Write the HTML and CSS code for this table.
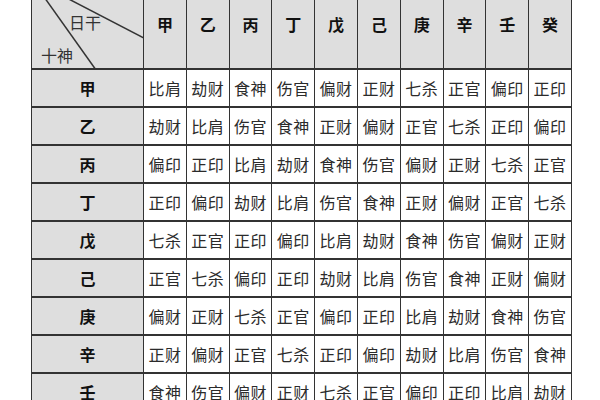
FILE: index.html
```html
<!DOCTYPE html>
<html lang="zh">
<head>
<meta charset="utf-8">
<link rel="stylesheet" href="styles.css">
</head>
<body>
<table class="gods">
  <colgroup>
    <col class="c-head">
    <col span="10" class="c-data">
  </colgroup>
  <thead>
    <tr class="top">
      <th class="corner">
        <svg class="diag" width="112" height="90" viewBox="0 0 112 90">
          <line x1="0" y1="0" x2="112" y2="58" stroke="#333" stroke-width="1.5"/>
          <line x1="0" y1="0" x2="64" y2="90" stroke="#333" stroke-width="1.5"/>
        </svg>
        <span class="lbl lbl-day">日干</span>
        <span class="lbl lbl-god">十神</span>
      </th>
      <th>甲</th><th>乙</th><th>丙</th><th>丁</th><th>戊</th><th>己</th><th>庚</th><th>辛</th><th>壬</th><th>癸</th>
    </tr>
  </thead>
  <tbody>
    <tr><th>甲</th><td>比肩</td><td>劫财</td><td>食神</td><td>伤官</td><td>偏财</td><td>正财</td><td>七杀</td><td>正官</td><td>偏印</td><td>正印</td></tr>
    <tr><th>乙</th><td>劫财</td><td>比肩</td><td>伤官</td><td>食神</td><td>正财</td><td>偏财</td><td>正官</td><td>七杀</td><td>正印</td><td>偏印</td></tr>
    <tr><th>丙</th><td>偏印</td><td>正印</td><td>比肩</td><td>劫财</td><td>食神</td><td>伤官</td><td>偏财</td><td>正财</td><td>七杀</td><td>正官</td></tr>
    <tr><th>丁</th><td>正印</td><td>偏印</td><td>劫财</td><td>比肩</td><td>伤官</td><td>食神</td><td>正财</td><td>偏财</td><td>正官</td><td>七杀</td></tr>
    <tr><th>戊</th><td>七杀</td><td>正官</td><td>正印</td><td>偏印</td><td>比肩</td><td>劫财</td><td>食神</td><td>伤官</td><td>偏财</td><td>正财</td></tr>
    <tr><th>己</th><td>正官</td><td>七杀</td><td>偏印</td><td>正印</td><td>劫财</td><td>比肩</td><td>伤官</td><td>食神</td><td>正财</td><td>偏财</td></tr>
    <tr><th>庚</th><td>偏财</td><td>正财</td><td>七杀</td><td>正官</td><td>偏印</td><td>正印</td><td>比肩</td><td>劫财</td><td>食神</td><td>伤官</td></tr>
    <tr><th>辛</th><td>正财</td><td>偏财</td><td>正官</td><td>七杀</td><td>正印</td><td>偏印</td><td>劫财</td><td>比肩</td><td>伤官</td><td>食神</td></tr>
    <tr><th>壬</th><td>食神</td><td>伤官</td><td>偏财</td><td>正财</td><td>七杀</td><td>正官</td><td>偏印</td><td>正印</td><td>比肩</td><td>劫财</td></tr>
    <tr><th>癸</th><td>伤官</td><td>食神</td><td>正财</td><td>偏财</td><td>正官</td><td>七杀</td><td>正印</td><td>偏印</td><td>劫财</td><td>比肩</td></tr>
  </tbody>
</table>
</body>
</html>
```
FILE: styles.css
```css
html, body {
  margin: 0;
  padding: 0;
  background: #ffffff;
  overflow: hidden;
}
body {
  font-family: "Noto Sans CJK SC", "Noto Sans", sans-serif;
  color: #2b2b2b;
}
.gods {
  border-collapse: collapse;
  table-layout: fixed;
  width: 540px;
  margin: -22px 0 0 31px;
}
.c-head { width: 112px; }
.c-data { width: 42.8px; }
.gods th,
.gods td {
  border: 2px solid #333;
  border-left-width: 1.5px;
  border-right-width: 1.5px;
  padding: 0;
  text-align: center;
  vertical-align: middle;
  font-size: 16px;
  line-height: 20px;
  height: 36px;
  white-space: nowrap;
}
.gods th {
  background: #dedede;
  font-weight: 700;
  color: #111;
}
.gods td {
  background: #ffffff;
  font-weight: 400;
  letter-spacing: 0.5px;
}
.top th {
  height: 88px;
}
.corner {
  position: relative;
}
.diag {
  position: absolute;
  left: 0;
  top: 0;
}
.lbl {
  position: absolute;
  font-weight: 400;
  font-size: 16px;
  line-height: 18px;
  color: #333;
}
.lbl-day {
  left: 37px;
  top: 33px;
}
.lbl-god {
  left: 9px;
  top: 66px;
}
```
